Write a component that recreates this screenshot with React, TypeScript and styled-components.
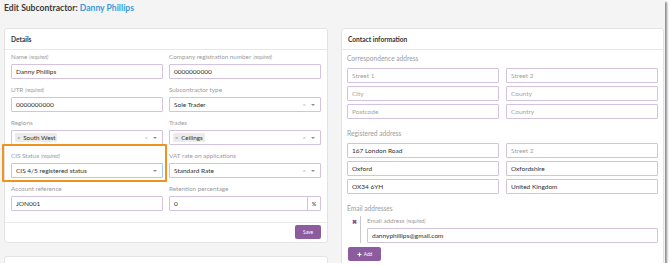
import React from "react";
import styled, { createGlobalStyle } from "styled-components";

const GlobalStyle = createGlobalStyle`
  html, body {
    margin: 0;
    padding: 0;
    background: #ffffff;
  }
  * {
    box-sizing: border-box;
  }
`;

const Page = styled.div`
  width: 665px;
  height: 263px;
  padding-left: 4px;
  background: #f4f4f4;
  overflow: hidden;
  box-shadow: 2px 2px 2px rgba(0, 0, 0, 0.45);
  font-family: Lato, "Open Sans", sans-serif;
  color: #333;
`;

const Title = styled.h1`
  margin: 0;
  padding-top: 2px;
  height: 28px;
  font-size: 8.6px;
  line-height: 12px;
  font-weight: 700;
  color: #3b3b3b;

  span {
    color: #3d9ad8;
  }
`;

const Columns = styled.div`
  display: grid;
  grid-template-columns: 324px 323px;
  column-gap: 13px;
  align-items: start;
`;

const Stack = styled.div`
  display: flex;
  flex-direction: column;
  gap: 13px;
`;

const Card = styled.section<{ $minHeight?: number }>`
  background: #fff;
  border: 1px solid #e3e3e3;
  border-radius: 3px;
  min-height: ${(p) => (p.$minHeight ? `${p.$minHeight}px` : "auto")};
`;

const CardHeader = styled.div`
  height: 21px;
  padding-left: 6px;
  border-bottom: 1px solid #e8e8e8;
  font-size: 6.6px;
  line-height: 20px;
  font-weight: 700;
  color: #333;
`;

const DetailsBody = styled.div`
  padding: 2px 6px 11px 6px;
  display: grid;
  grid-template-columns: 152px 152px;
  column-gap: 6px;
  row-gap: 6px;
`;

const Field = styled.div`
  display: flex;
  flex-direction: column;
`;

const Label = styled.label`
  display: block;
  height: 10px;
  margin-bottom: 2px;
  font-size: 6.3px;
  line-height: 10px;
  color: #9b9b9b;
  white-space: nowrap;

  em {
    font-size: 4.8px;
    margin-left: 2px;
  }
`;

const Box = styled.div<{ $focused?: boolean; $addon?: boolean }>`
  height: 15px;
  border: 1px solid ${(p) => (p.$focused ? "#a9cdec" : "#d4c3de")};
  border-radius: 1px;
  display: flex;
  align-items: center;
  padding: 0 0 0 4px;
  background: #fff;
  font-size: 6.5px;
  color: #2f2f2f;
  white-space: nowrap;
  overflow: hidden;
`;

const Placeholder = styled.span`
  color: #a3a3a3;
`;

const Value = styled.span`
  flex: 1;
`;

const Indicators = styled.span`
  display: flex;
  align-items: center;
  gap: 5px;
  padding-right: 5px;
  color: #b8b8b8;
  font-size: 6px;
`;

const Caret = styled.span`
  width: 0;
  height: 0;
  border-left: 2px solid transparent;
  border-right: 2px solid transparent;
  border-top: 2.5px solid #8c8c8c;
`;

const Tag = styled.span`
  display: inline-flex;
  align-items: center;
  height: 9px;
  padding: 0 2px;
  margin-left: -1px;
  background: #ececec;
  border-radius: 1px;
  font-size: 6.3px;

  b {
    font-weight: 400;
    color: #888;
    margin-right: 3px;
    font-size: 5.5px;
  }
`;

const Addon = styled.span`
  width: 13px;
  height: 100%;
  border-left: 1px solid #d4c3de;
  display: flex;
  align-items: center;
  justify-content: center;
  font-size: 5.5px;
  color: #6d5a7a;
  font-weight: 700;
`;

const Highlight = styled.div`
  margin: -7px -4px -4px -9px;
  padding: 7px 4px 4px 9px;
  border: 2px solid #f0921c;
  border-radius: 1px;
`;

const HighlightInner = styled.div`
  margin: -2px;
`;

const Footer = styled.div`
  border-top: 1px solid #ebebeb;
  padding: 2px 6px 3px;
  display: flex;
  justify-content: flex-end;
`;

const PurpleButton = styled.button<{ $width: number }>`
  width: ${(p) => p.$width}px;
  height: 14px;
  border: none;
  border-radius: 2px;
  background: #8c5c9f;
  color: #fff;
  font-family: Lato, sans-serif;
  font-size: 4.8px;
  display: inline-flex;
  align-items: center;
  justify-content: center;
  gap: 2px;
  padding: 0;
  cursor: pointer;
`;

const ContactBody = styled.div`
  padding: 2px 5px 6px 5px;
`;

const SectionLabel = styled.div<{ $gapTop?: number }>`
  height: 12px;
  margin-top: ${(p) => p.$gapTop ?? 0}px;
  margin-bottom: 4px;
  font-size: 6.6px;
  line-height: 12px;
  color: #9d9d9d;
`;

const AddressGrid = styled.div`
  display: grid;
  grid-template-columns: 152px 152px;
  column-gap: 7px;
  row-gap: 3px;
`;

const EmailItem = styled.div`
  display: flex;
  margin: -2px 0 0 3px;
`;

const Remove = styled.span`
  width: 8px;
  padding-top: 2px;
  font-size: 6px;
  line-height: 8px;
  color: #7d4f91;
  font-weight: 700;
  text-align: center;
`;

const EmailFields = styled.div`
  flex: 1;
  margin-left: 2px;
  padding-left: 6px;
  border-left: 1px solid #c9c9c9;
`;

const AddRow = styled.div`
  display: flex;
  margin: 4px 0 0 1px;
`;

const Plus = () => (
  <svg width="5" height="5" viewBox="0 0 10 10">
    <path d="M5 1v8M1 5h8" stroke="#fff" strokeWidth="2.4" />
  </svg>
);

const SelectEnd = ({ clear = true }: { clear?: boolean }) => (
  <Indicators>
    {clear && <span>×</span>}
    <Caret />
  </Indicators>
);

export default function App() {
  return (
    <>
      <GlobalStyle />
      <Page>
        <Title>
          Edit Subcontractor: <span>Danny Phillips</span>
        </Title>
        <Columns>
          <Stack>
            <Card>
              <CardHeader>Details</CardHeader>
              <DetailsBody>
                <Field>
                  <Label>
                    Name<em>(required)</em>
                  </Label>
                  <Box>Danny Phillips</Box>
                </Field>
                <Field>
                  <Label>
                    Company registration number<em>(required)</em>
                  </Label>
                  <Box>0000000000</Box>
                </Field>
                <Field>
                  <Label>
                    UTR<em>(required)</em>
                  </Label>
                  <Box>0000000000</Box>
                </Field>
                <Field>
                  <Label>Subcontractor type</Label>
                  <Box>
                    <Value>Sole Trader</Value>
                    <SelectEnd />
                  </Box>
                </Field>
                <Field>
                  <Label>Regions</Label>
                  <Box>
                    <Value>
                      <Tag>
                        <b>×</b>South West
                      </Tag>
                    </Value>
                    <SelectEnd />
                  </Box>
                </Field>
                <Field>
                  <Label>Trades</Label>
                  <Box>
                    <Value>
                      <Tag>
                        <b>×</b>Ceilings
                      </Tag>
                    </Value>
                    <SelectEnd />
                  </Box>
                </Field>
                <Highlight>
                  <HighlightInner>
                    <Field>
                      <Label>
                        CIS Status<em>(required)</em>
                      </Label>
                      <Box $focused>
                        <Value>CIS 4/5 registered status</Value>
                        <SelectEnd clear={false} />
                      </Box>
                    </Field>
                  </HighlightInner>
                </Highlight>
                <Field>
                  <Label>VAT rate on applications</Label>
                  <Box>
                    <Value>Standard Rate</Value>
                    <SelectEnd />
                  </Box>
                </Field>
                <Field>
                  <Label>Account reference</Label>
                  <Box>JON001</Box>
                </Field>
                <Field>
                  <Label>Retention percentage</Label>
                  <Box>
                    <Value>0</Value>
                    <Addon>%</Addon>
                  </Box>
                </Field>
              </DetailsBody>
              <Footer>
                <PurpleButton $width={26}>Save</PurpleButton>
              </Footer>
            </Card>
            <Card $minHeight={40} />
          </Stack>

          <Card $minHeight={260}>
            <CardHeader>Contact information</CardHeader>
            <ContactBody>
              <SectionLabel>Correspondence address</SectionLabel>
              <AddressGrid>
                <Box>
                  <Placeholder>Street 1</Placeholder>
                </Box>
                <Box>
                  <Placeholder>Street 2</Placeholder>
                </Box>
                <Box>
                  <Placeholder>City</Placeholder>
                </Box>
                <Box>
                  <Placeholder>County</Placeholder>
                </Box>
                <Box>
                  <Placeholder>Postcode</Placeholder>
                </Box>
                <Box>
                  <Placeholder>Country</Placeholder>
                </Box>
              </AddressGrid>

              <SectionLabel $gapTop={8}>Registered address</SectionLabel>
              <AddressGrid>
                <Box>167 London Road</Box>
                <Box>
                  <Placeholder>Street 2</Placeholder>
                </Box>
                <Box>Oxford</Box>
                <Box>Oxfordshire</Box>
                <Box>OX34 6YH</Box>
                <Box>United Kingdom</Box>
              </AddressGrid>

              <SectionLabel $gapTop={8}>Email addresses</SectionLabel>
              <EmailItem>
                <Remove>✖</Remove>
                <EmailFields>
                  <Label>
                    Email address<em>(required)</em>
                  </Label>
                  <Box>dannyphillips@gmail.com</Box>
                </EmailFields>
              </EmailItem>
              <AddRow>
                <PurpleButton $width={33}>
                  <Plus /> Add
                </PurpleButton>
              </AddRow>
            </ContactBody>
          </Card>
        </Columns>
      </Page>
    </>
  );
}
